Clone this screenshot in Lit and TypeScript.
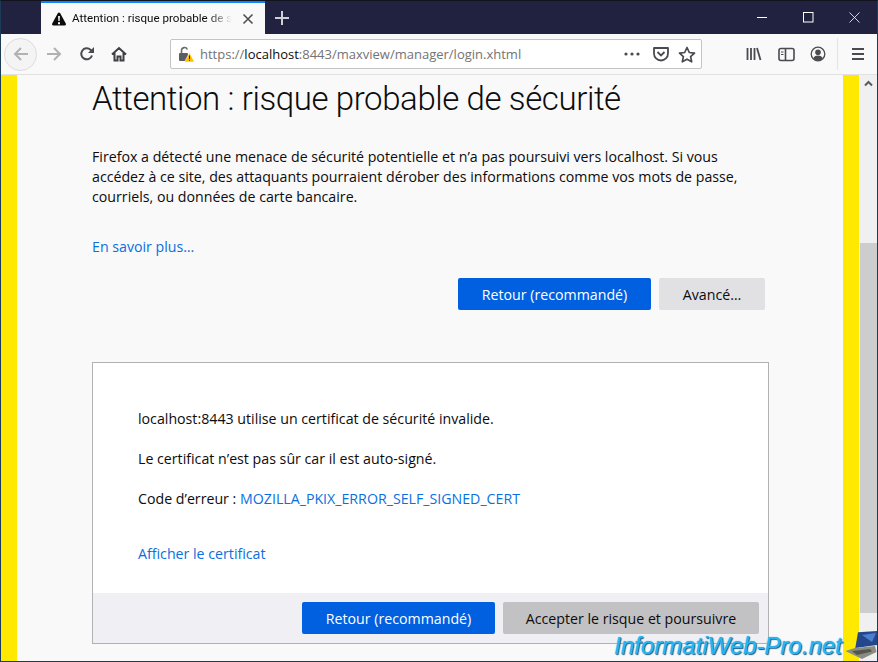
import { LitElement, html, css } from "lit";
import { customElement } from "lit/decorators.js";

@customElement("app-root")
export class AppRoot extends LitElement {
  static styles = css`
    :host { display: block; width: 878px; height: 662px; overflow: hidden; font-family: "Open Sans", "Noto Sans", sans-serif; color: #0c0c0d; }
    * { box-sizing: border-box; }
    .win { position: relative; width: 878px; height: 662px; display: flex; flex-direction: column; border: 1px solid #1c3b55; border-top-color: #11131f; background: #f9f9fa; overflow: hidden; }
    .titlebar { height: 33px; background: #20223f; display: flex; align-items: stretch; padding-left: 40px; flex: none; }
    .tab { width: 224px; background: #f9f9fa; border-top: 2px solid #0a84ff; display: flex; align-items: center; padding: 0 11px 0 10px; gap: 5px; font-family: Roboto, sans-serif; font-size: 11.6px; color: #0c0c0d; }
    .tab-title { flex: 1; margin-right: 5px; padding-bottom: 1px; white-space: nowrap; overflow: hidden; -webkit-mask-image: linear-gradient(90deg, #000 85%, transparent); mask-image: linear-gradient(90deg, #000 85%, transparent); }
    .newtab { width: 34px; display: flex; align-items: center; justify-content: center; }
    .spacer { flex: 1; }
    .winbtn { width: 46px; display: flex; align-items: center; justify-content: center; }
    .toolbar { height: 41px; flex: none; background: #f9f9fa; border-bottom: 1px solid #e1e1e3; display: flex; align-items: center; padding-left: 3px; }
    .tb { width: 33px; height: 33px; display: flex; align-items: center; justify-content: center; flex: none; }
    .home { width: 31px; }
    .back { border: 1px solid #dcdcde; border-radius: 50%; background: #f4f4f5; }
    .urlbar { width: 532px; height: 30px; margin-left: 36px; background: #fff; border: 1px solid #c4c4c6; border-radius: 2px; display: flex; align-items: center; padding-left: 7px; font-size: 13px; color: #737373; flex: none; }
    .url { flex: 1; margin-left: 5px; white-space: nowrap; }
    .url b { font-weight: 400; color: #0c0c0d; }
    .urlicons { display: flex; align-items: center; gap: 8px; padding-right: 5px; }
    .pocket { margin-left: 3px; }
    .right { display: flex; align-items: center; margin-left: 36px; height: 100%; }
    .right .tb { width: 32px; }
    .sep { width: 1px; height: 32px; background: #e4e4e6; margin: 0 4px 0 3px; }
    .page { flex: 1; display: flex; min-height: 0; }
    .yellow { width: 16px; background: #ffe900; flex: none; }
    .main { flex: 1; padding: 0 75px 0 75px; min-width: 0; overflow: hidden; }
    .scroll { width: 17px; flex: none; background: #f0f0f0; margin-left: 1px; display: flex; flex-direction: column; }
    .arrow { height: 17px; display: flex; align-items: center; justify-content: center; }
    .track { height: 151px; }
    .thumb { height: 370px; background: #cdcdcd; }
    h1 { margin: 0; padding-top: 1px; font-family: Roboto, "Open Sans", sans-serif; font-size: 33px; letter-spacing: -0.4px; line-height: 45px; font-weight: 300; white-space: nowrap; color: #0c0c0d; }
    .intro { margin: 26px 0 0 0; font-size: 14.2px; line-height: 20px; color: #0c0c0d; width: 665px; }
    a { color: #0a6fe0; text-decoration: none; }
    .more { display: block; margin-top: 30px; font-size: 14.2px; line-height: 20px; }
    .btns { display: flex; justify-content: flex-end; gap: 8px; margin-top: 21px; padding-right: 3px; }
    button { font: inherit; font-size: 14.2px; border: none; border-radius: 2px; height: 32px; padding: 0; color: #0c0c0d; }
    .primary { background: #0060df; color: #fff; width: 193px; }
    .adv { background: #e1e1e3; width: 106px; }
    .box { margin-top: 52px; width: 677px; height: 282px; background: #fff; border: 1px solid #b1b1b3; display: flex; flex-direction: column; }
    .box-body { flex: 1; padding: 46px 45px 0 45px; font-size: 14.2px; }
    .box-body p { margin: 0 0 20px 0; line-height: 20px; }
    .box-body .cert { display: block; margin-top: 34.5px; line-height: 20px; }
    .box-foot { height: 50px; background: #f0f0f4; display: flex; justify-content: flex-end; align-items: flex-start; gap: 8px; padding: 9px 9px 0 0; flex: none; }
    .accept { background: #c2c1c3; width: 256px; }
    .wm { position: absolute; right: 35px; bottom: 1px; font: italic 400 24px "Liberation Sans", sans-serif; color: #27b5f2; text-shadow: 0 0 1px #27b5f2, 1px 1px 1px #1b4e74; white-space: nowrap; }
    .laptop { position: absolute; right: 0; bottom: 0; }
  `;

  render() {
    const s = "#4a4a4f";
    return html`
      <div class="win">
        <div class="titlebar">
          <div class="tab">
            <svg width="16" height="16" viewBox="0 0 16 16"><path fill="#0c0c0d" d="M8 1.500c-.5 0-1 .3-1.200.8L1.200 12.600c-.5 1 .2 2 1.200 2h11.200c1 0 1.700-1 1.200-2L9.200 2.300C9 1.800 8.500 1.500 8 1.500z"/><path fill="#fff" d="M7.100 5h1.800l-.3 5H7.400zM7 11.300h2v1.900H7z"/></svg>
            <span class="tab-title">Attention : risque probable de sécurité</span>
            <svg width="12" height="12" viewBox="0 0 12 12"><path d="M1.500 1.500l9 9M10.500 1.500l-9 9" stroke="#4a4a4f" stroke-width="1.500"/></svg>
          </div>
          <div class="newtab"><svg width="14" height="14" viewBox="0 0 14 14"><path d="M7 0v14M0 7h14" stroke="#cfcfd6" stroke-width="2"/></svg></div>
          <div class="spacer"></div>
          <div class="winbtn"><svg width="11" height="11" viewBox="0 0 11 11"><path d="M0 5.500h10" stroke="#fff"/></svg></div>
          <div class="winbtn"><svg width="11" height="11" viewBox="0 0 11 11"><rect x=".5" y=".5" width="9.500" height="9.500" fill="none" stroke="#fff"/></svg></div>
          <div class="winbtn"><svg width="11" height="11" viewBox="0 0 11 11"><path d="M.5.500l10 10M10.500.500l-10 10" stroke="#fff" stroke-width=".8"/></svg></div>
        </div>
        <div class="toolbar">
          <div class="tb back"><svg width="16" height="16" viewBox="0 0 16 16"><path d="M15 8H2M8 2L2 8l6 6" fill="none" stroke="#b1b1b3" stroke-width="2"/></svg></div>
          <div class="tb"><svg width="16" height="16" viewBox="0 0 16 16"><path d="M1 8h13M8 2l6 6-6 6" fill="none" stroke="#b1b1b3" stroke-width="2"/></svg></div>
          <div class="tb"><svg width="16" height="16" viewBox="0 0 16 16"><path d="M13 9.500A5.500 5.500 0 1 1 11.500 3.800L14 6" fill="none" stroke="${s}" stroke-width="2"/><path d="M15 1v6H9z" fill="${s}"/></svg></div>
          <div class="tb home"><svg width="16" height="16" viewBox="0 0 16 16"><path d="M1 8.500L8 2l7 6.500M3.500 7v7.500h3v-4h3v4h3V7" fill="none" stroke="#3f3f44" stroke-width="2"/></svg></div>
          <div class="urlbar">
            <svg width="17" height="17" viewBox="0 0 17 17"><path d="M3.500 7V4.500a3 3 0 0 1 5.800-1" fill="none" stroke="#6a6a6f" stroke-width="1.600"/><rect x="1" y="7" width="9" height="8" rx="1" fill="#5c5c61"/><path d="M11.500 6.500l5 9.500h-10z" fill="#ffbf00" stroke="#fff" stroke-width=".6"/><path d="M11 9.500h1v3.500h-1zM11 13.700h1v1h-1z" fill="#3a2b00"/></svg>
            <span class="url">https://<b>localhost</b>:8443/maxview/manager/login.xhtml</span>
            <span class="urlicons">
              <svg width="18" height="16" viewBox="0 0 18 16"><circle cx="3" cy="8" r="1.600" fill="${s}"/><circle cx="9" cy="8" r="1.600" fill="${s}"/><circle cx="15" cy="8" r="1.600" fill="${s}"/></svg>
              <svg class="pocket" width="18" height="16" viewBox="0 0 18 16"><path d="M2 2h14v5.500a7 7 0 0 1-14 0z" fill="none" stroke="${s}" stroke-width="1.800" stroke-linejoin="round"/><path d="M5.500 6L9 9.500 12.500 6" fill="none" stroke="${s}" stroke-width="1.800"/></svg>
              <svg width="18" height="17" viewBox="0 0 18 17"><path d="M9 1.500l2.300 5 5.200.6-3.900 3.500 1.100 5.200L9 13.200l-4.700 2.600 1.100-5.200L1.500 7.100l5.200-.6z" fill="none" stroke="${s}" stroke-width="1.700" stroke-linejoin="round"/></svg>
            </span>
          </div>
          <div class="right">
            <div class="tb"><svg width="16" height="16" viewBox="0 0 16 16"><path d="M1.500 2v12M5 2v12M8.500 2v12M11 2l3.500 12" stroke="${s}" stroke-width="1.800" fill="none"/></svg></div>
            <div class="tb"><svg width="17" height="15" viewBox="0 0 17 15"><rect x="1" y="1.500" width="15" height="12" rx="2" fill="none" stroke="${s}" stroke-width="1.600"/><path d="M7.500 2v11" stroke="${s}" stroke-width="1.600"/><path d="M3 5h2.500M3 7.500h2.500" stroke="${s}"/></svg></div>
            <div class="tb"><svg width="16" height="16" viewBox="0 0 16 16"><circle cx="8" cy="8" r="6.800" fill="none" stroke="${s}" stroke-width="1.300"/><circle cx="8" cy="6.300" r="2.800" fill="${s}"/><path d="M3.200 12.300c1-2 3-2.700 4.800-2.700s3.800.7 4.800 2.700A6.500 6.500 0 0 1 3.200 12.300z" fill="${s}"/></svg></div>
            <div class="sep"></div>
            <div class="tb"><svg width="14" height="14" viewBox="0 0 14 14"><path d="M1 2h12M1 7h12M1 12h12" stroke="${s}" stroke-width="1.800"/></svg></div>
          </div>
        </div>
        <div class="page">
          <div class="yellow"></div>
          <div class="main">
            <h1>Attention : risque probable de sécurité</h1>
            <p class="intro">Firefox a détecté une menace de sécurité potentielle et n’a pas poursuivi vers localhost. Si vous accédez à ce site, des attaquants pourraient dérober des informations comme vos mots de passe, courriels, ou données de carte bancaire.</p>
            <a class="more">En savoir plus…</a>
            <div class="btns">
              <button class="primary">Retour (recommandé)</button>
              <button class="adv">Avancé…</button>
            </div>
            <div class="box">
              <div class="box-body">
                <p>localhost:8443 utilise un certificat de sécurité invalide.</p>
                <p>Le certificat n’est pas sûr car il est auto-signé.</p>
                <p>Code d’erreur : <a>MOZILLA_PKIX_ERROR_SELF_SIGNED_CERT</a></p>
                <a class="cert">Afficher le certificat</a>
              </div>
              <div class="box-foot">
                <button class="primary">Retour (recommandé)</button>
                <button class="accept">Accepter le risque et poursuivre</button>
              </div>
            </div>
          </div>
          <div class="yellow"></div>
          <div class="scroll">
            <div class="arrow"><svg width="9" height="7" viewBox="0 0 9 7"><path d="M1 5.500l3.500-3.500L8 5.500" fill="none" stroke="#5a5a5a" stroke-width="2"/></svg></div>
            <div class="track"></div>
            <div class="thumb"></div>
          </div>
        </div>
        <div class="wm">InformatiWeb-Pro.net</div>
        <svg class="laptop" width="33" height="30" viewBox="0 0 33 30">
          <path d="M14 1.300L33 0v14L11.300 17z" fill="#24478c"/>
          <path d="M18 4l10 7 4-9z" fill="#4a7fd0"/>
          <path d="M1.300 20L11 17l20-2 1.500 6L18 28z" fill="#8a8c82"/>
          <path d="M8 20l18-2 2 2.500L13 24z" fill="#55574f"/>
        </svg>
      </div>
    `;
  }
}
